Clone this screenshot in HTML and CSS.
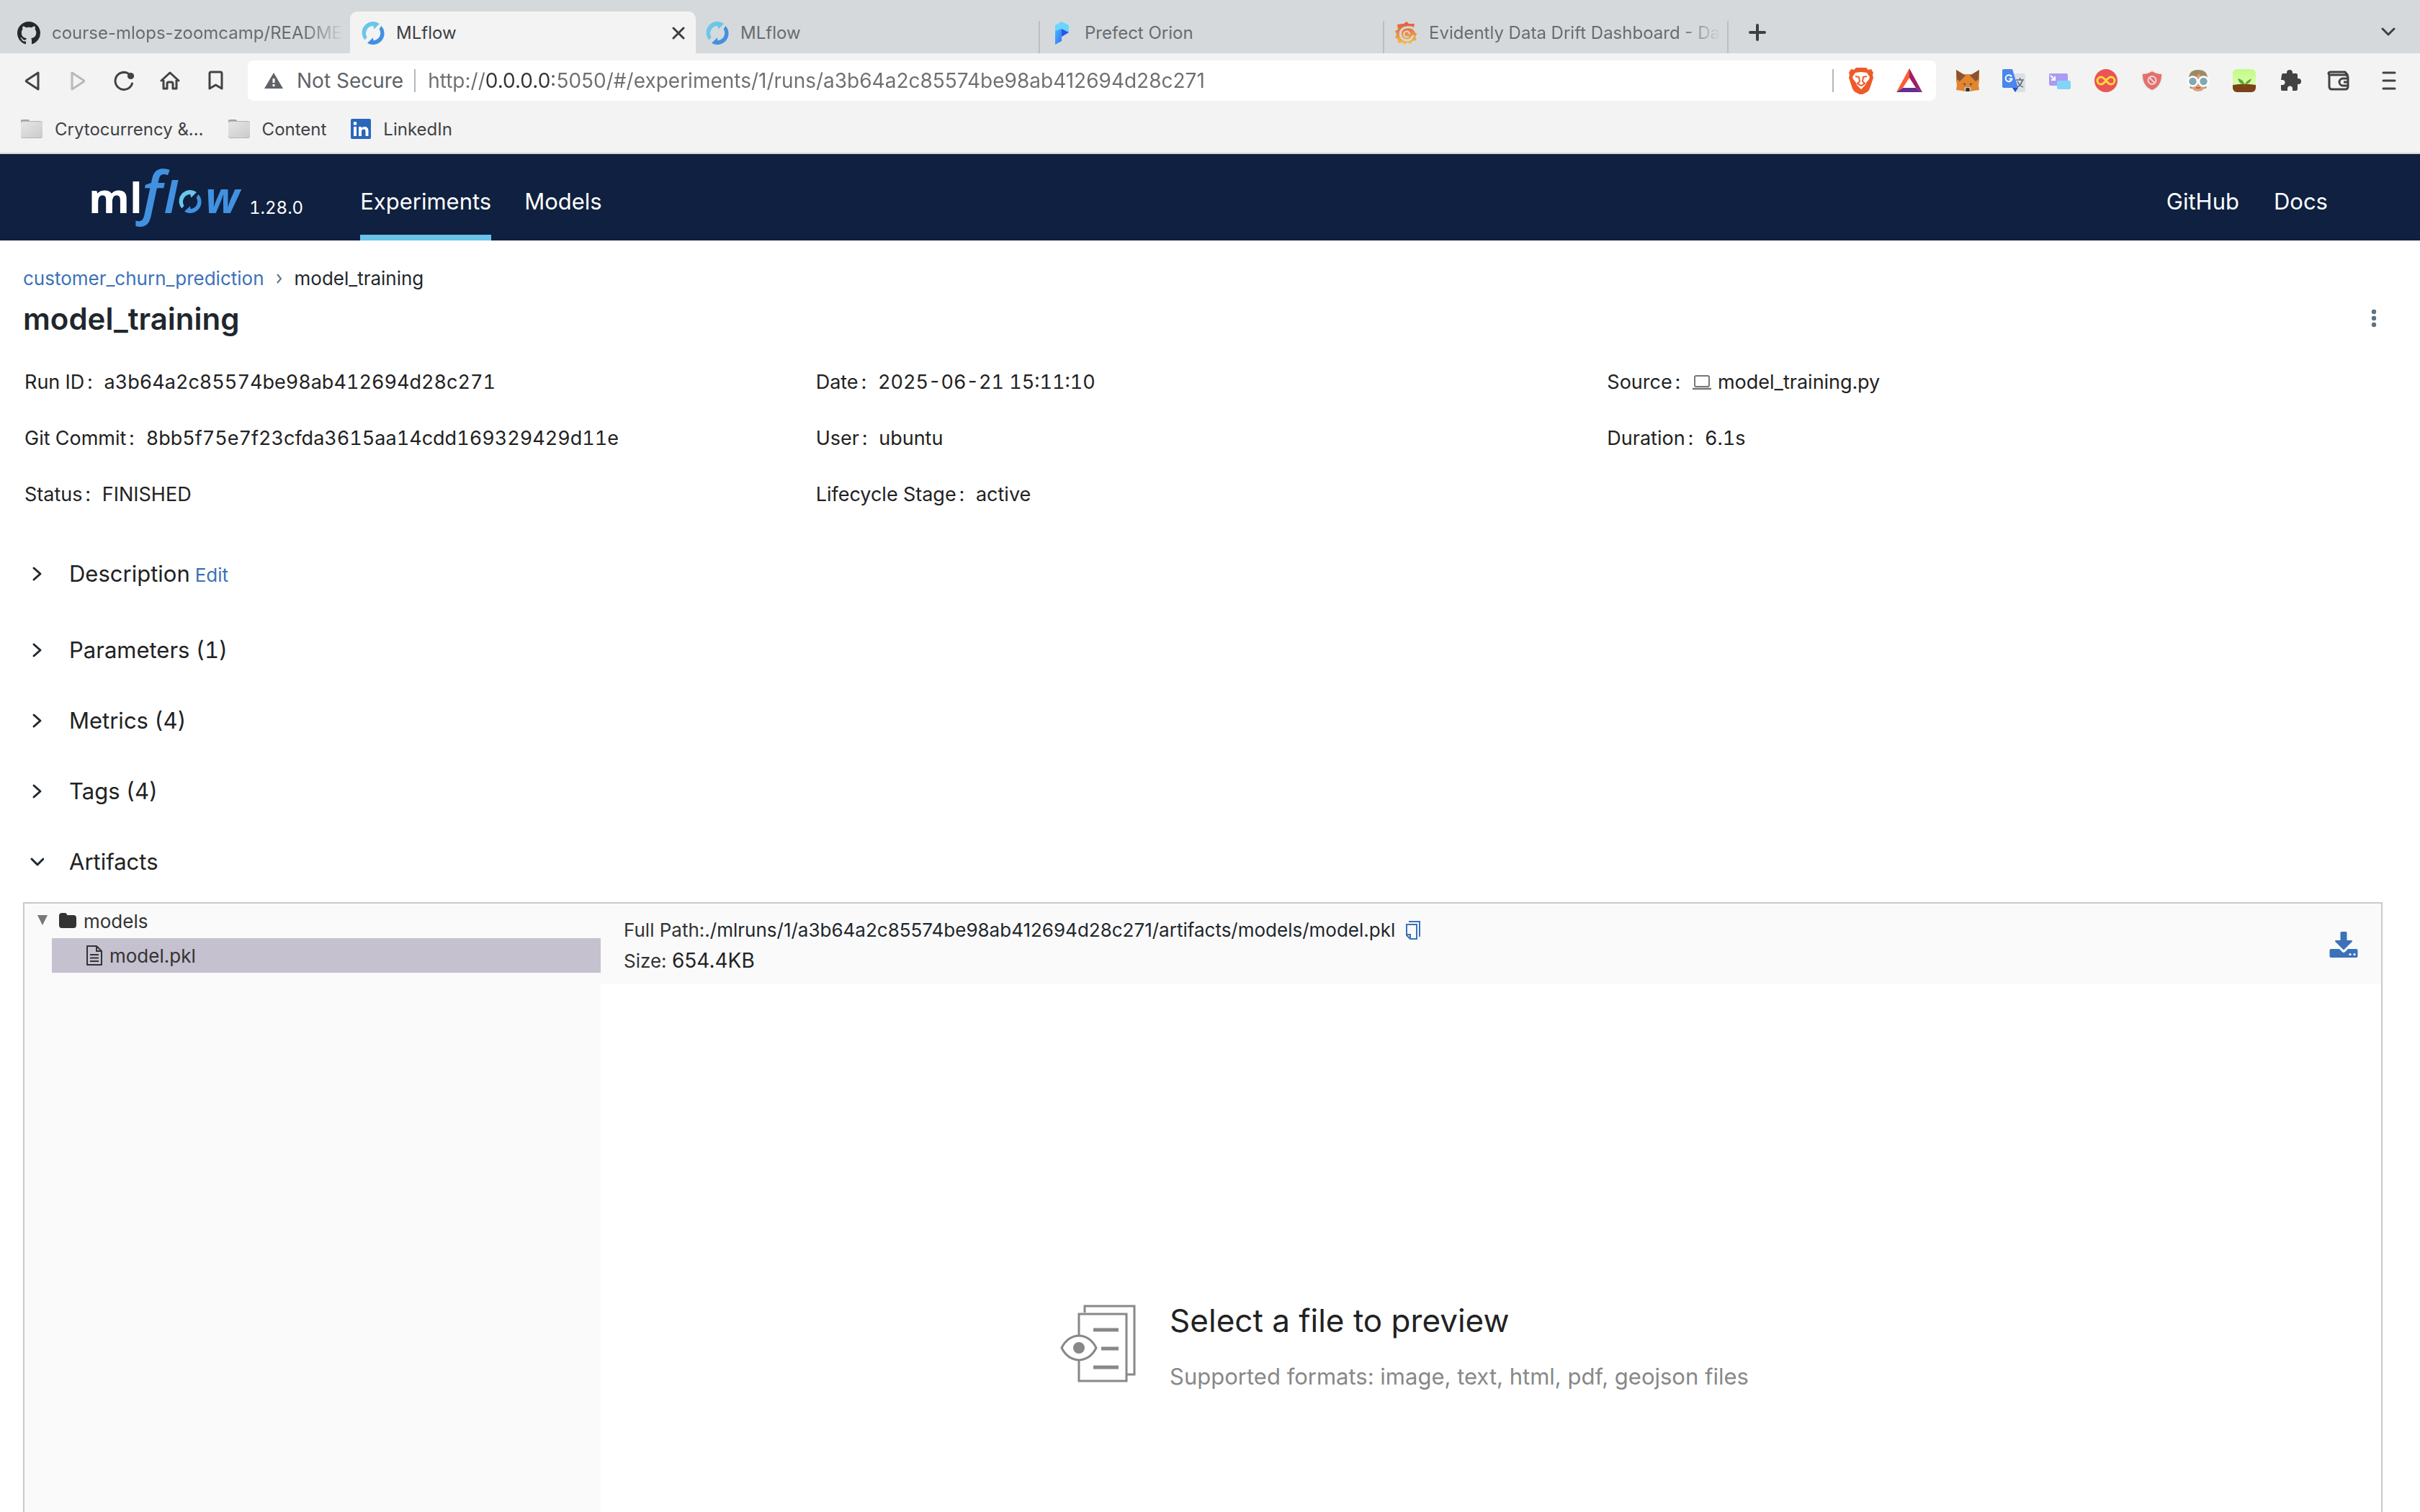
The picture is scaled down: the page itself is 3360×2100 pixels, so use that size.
FILE: index.html
```html
<!DOCTYPE html>
<html lang="en">
<head>
<meta charset="utf-8">
<meta name="viewport" content="width=device-width, initial-scale=1">
<title>MLflow</title>
<link rel="stylesheet" href="styles.css">
</head>
<body>
<svg class="defs" aria-hidden="true">
  <defs>
    <symbol id="mlflow-ring" viewBox="0 0 32 32">
      <path fill="#6ac6ea" d="M4.500 25.500A15.300 15.300 0 0 1 25 3L17.400 10.400 16.200 6A10.300 10.300 0 0 0 7.600 21.800Z"/>
      <path fill="#4291e0" d="M27.400 6A15.500 15.500 0 0 1 8 29.800L16 22.200 16.400 26.200A10.300 10.300 0 0 0 24.600 10.400Z"/>
    </symbol>
    <symbol id="folder-grey" viewBox="0 0 32 28">
      <path fill="#a3a3a3" d="M1 3a2 2 0 0 1 2-2h8a2 2 0 0 1 2 2v4H1z"/>
      <rect x="1" y="3" width="30" height="24" rx="3" fill="#b3b3b3"/>
      <rect x="1" y="4" width="30" height="22" rx="3" fill="url(#folder-fill)"/>
    </symbol>
    <linearGradient id="folder-fill" x1="0" y1="0" x2="1" y2="1"><stop offset="0" stop-color="#e6e6e6"/><stop offset="1" stop-color="#cbcbcb"/></linearGradient>
    <linearGradient id="grafana-fill" x1="0" y1="0" x2="0" y2="1"><stop offset="0" stop-color="#e0573a"/><stop offset="1" stop-color="#f3c24c"/></linearGradient>
    <linearGradient id="prefect-fill" x1="0" y1="0" x2="1" y2="1"><stop offset="0" stop-color="#4db8ff"/><stop offset="1" stop-color="#3172f5"/></linearGradient>
    <linearGradient id="plant-fill" x1="0" y1="0" x2="0" y2="1"><stop offset="0" stop-color="#c2fb86"/><stop offset="1" stop-color="#e6fcc0"/></linearGradient>
    <symbol id="chevron-right" viewBox="0 0 20 24"><path fill="none" stroke="#1f272d" stroke-width="3" stroke-linecap="round" stroke-linejoin="round" d="M6 4l9 8-9 8"/></symbol>
  </defs>
</svg>

<header class="browser">
  <nav class="tabs" aria-label="Browser tabs">
    <a class="tab first" href="#github">
      <svg width="32" height="32" viewBox="0 0 16 16"><path fill="#24292e" d="M8 0C3.58 0 0 3.58 0 8c0 3.54 2.29 6.53 5.47 7.59.4.07.55-.17.55-.38 0-.19-.01-.82-.01-1.49-2.01.37-2.53-.49-2.69-.94-.09-.23-.48-.94-.82-1.13-.28-.15-.68-.52-.01-.53.63-.01 1.08.58 1.23.82.72 1.21 1.87.87 2.33.66.07-.52.28-.87.51-1.07-1.78-.2-3.64-.89-3.64-3.95 0-.87.31-1.59.82-2.15-.08-.2-.36-1.02.08-2.12 0 0 .67-.21 2.2.82.64-.18 1.32-.27 2-.27s1.36.09 2 .27c1.53-1.04 2.2-.82 2.2-.82.44 1.1.16 1.92.08 2.12.51.56.82 1.27.82 2.15 0 3.07-1.87 3.75-3.65 3.95.29.25.54.73.54 1.48 0 1.07-.01 1.93-.01 2.2 0 .21.15.46.55.38A8.01 8.01 0 0 0 16 8c0-4.42-3.58-8-8-8z"/></svg>
      <span class="tab-title">course-mlops-zoomcamp/README.md</span>
    </a>
    <div class="tab active">
      <svg width="32" height="32"><use href="#mlflow-ring"/></svg>
      <span class="tab-title">MLflow</span>
      <button class="tab-close" aria-label="Close tab"><svg width="18" height="18" viewBox="0 0 18 18"><path stroke="#3c4043" stroke-width="3" stroke-linecap="round" d="M2 2l14 14M16 2L2 16"/></svg></button>
    </div>
    <a class="tab" href="#mlflow">
      <svg width="32" height="32"><use href="#mlflow-ring"/></svg>
      <span class="tab-title">MLflow</span>
    </a>
    <a class="tab" href="#prefect">
      <svg width="32" height="32" viewBox="0 0 32 32"><path fill="url(#prefect-fill)" d="M7 32V13l9-4v18z"/><path fill="#6ad5ff" d="M7 5l9-5 10 5v10l-10-5-9 3z"/><path fill="#2155ee" d="M16 10l10 5-10 6z"/></svg>
      <span class="tab-title">Prefect Orion</span>
    </a>
    <a class="tab last" href="#evidently">
      <svg width="32" height="32" viewBox="0 0 32 32"><path fill="url(#grafana-fill)" d="M13 3l4-3 3 3 8 0-1 5 4 5v4l-2 4 2 5-6 1-2 4-5-2-4 3-3-3-6 1 0-5-4-3 2-4-2-5 4-2-1-7z"/><path fill="none" stroke="#d5d9dc" stroke-width="3" d="M31 16C28 9 23 7 18 8A9 9 0 1 0 26 19"/><path fill="none" stroke="#d5d9dc" stroke-width="2" stroke-linecap="round" d="M21 17a4 4 0 1 0-2 4"/></svg>
      <span class="tab-title">Evidently Data Drift Dashboard - Dashboards</span>
    </a>
    <button class="new-tab" aria-label="New tab"><svg width="24" height="24" viewBox="0 0 24 24"><path stroke="#3c4043" stroke-width="4" stroke-linecap="round" d="M12 2v20M2 12h20"/></svg></button>
    <button class="tab-search" aria-label="Search tabs"><svg width="20" height="14" viewBox="0 0 20 14"><path fill="none" stroke="#3c4043" stroke-width="3" stroke-linecap="round" stroke-linejoin="round" d="M2 2l8 8 8-8"/></svg></button>
  </nav>

  <div class="toolbar">
    <button class="tool" aria-label="Back"><svg width="28" height="28" viewBox="0 0 28 28"><path fill="none" stroke="#424242" stroke-width="3" stroke-linejoin="round" d="M23 3v23L7 15.500q-1.500-1 0-2z"/></svg></button>
    <button class="tool" aria-label="Forward"><svg width="28" height="28" viewBox="0 0 28 28"><path fill="none" stroke="#b9b9b9" stroke-width="3" stroke-linejoin="round" d="M6 3v23l16-10.500q1.500-1 0-2z"/></svg></button>
    <button class="tool" aria-label="Reload"><svg width="28" height="28" viewBox="0 0 28 28"><path fill="none" stroke="#424242" stroke-width="3" stroke-linecap="round" d="M25.500 18A12 12 0 1 1 20 4"/><circle cx="23.500" cy="7.500" r="4.600" fill="#424242"/></svg></button>
    <button class="tool" aria-label="Home"><svg width="28" height="28" viewBox="0 0 28 28"><path fill="none" stroke="#424242" stroke-width="3" stroke-linecap="round" stroke-linejoin="round" d="M2 14L14 3l12 11M5 13v12h5v-7q0-2 2-2h4q2 0 2 2v7h5V13"/></svg></button>
    <button class="tool" aria-label="Bookmark"><svg width="28" height="28" viewBox="0 0 28 28"><path fill="none" stroke="#424242" stroke-width="3" stroke-linejoin="round" d="M5 25V4q0-2 2-2h13q2 0 2 2v21l-8.500-5z"/></svg></button>

    <div class="address">
      <svg class="warn" width="26" height="22" viewBox="0 0 26 22"><path fill="#5f6368" d="M13 0l13 22H0z"/><path stroke="#fff" stroke-width="3" d="M13 8v6M13 16v3"/></svg>
      <label class="secure" for="url">Not Secure</label>
      <span class="rule"></span>
      <input id="url" class="url" type="text" value="http://0.0.0.0:5050/#/experiments/1/runs/a3b64a2c85574be98ab412694d28c271">
      <span class="rule"></span>
      <button class="shield" aria-label="Brave Shields"><svg width="34" height="38" viewBox="0 0 34 38"><path fill="#ee5a29" d="M10 1h14l3 3 4-1 3 5-1 3 1 4-5 15q-1 3-4 5l-8 4-8-4q-3-2-4-5L0 15l1-4-1-3 3-5 4 1z"/><path fill="#fff" d="M9 8l8-1 8 1 4 6-1 3-4 5-1 3-6 6-6-6-1-3-4-5-1-3z"/><path fill="none" stroke="#ee5a29" stroke-width="2" d="M9 13l5 1 1 6-3 3 5 3 5-3-3-3 1-6 5-1"/></svg></button>
      <button class="rewards" aria-label="Brave Rewards"><svg width="38" height="34" viewBox="0 0 38 34"><path fill="#ff5a34" d="M19 0v13l-9 14-9 6z"/><path fill="#9e1f63" d="M19 0l18 33-9-6-9-14z"/><path fill="#662d91" d="M1 33l9-6h18l9 6z"/></svg></button>
    </div>

    <div class="extensions">
      <button class="tool" aria-label="MetaMask"><svg width="32" height="32" viewBox="0 0 32 32"><path fill="#e2852f" d="M0 1l10 6h12l10-6v15l-1 6 1 7-8 1-4 1h-8l-4-1-8-1 1-7-1-6z"/><path fill="#8b5430" d="M0 1l13 8-8 8-4-3zM32 1L19 9l8 8 4-3z"/><path fill="#c86f26" d="M8 19l5 2-1 4zM24 19l-5 2 1 4z"/><path fill="#2c343c" d="M10 20l3 2v-2zM22 20l-3 2v-2z"/><path fill="#c9c5c0" d="M12 25h8l1 4-3 2h-4l-3-2z"/><path fill="#2c343c" d="M14 26h4l1 3-1 2h-4l-1-2z"/></svg></button>
      <button class="tool" aria-label="Google Translate"><svg width="32" height="32" viewBox="0 0 32 32"><path fill="#dcdfe3" d="M14 6h16a2 2 0 0 1 2 2v22a2 2 0 0 1-2 2H18z"/><path fill="none" stroke="#5f6c78" stroke-width="1.600" d="M19 15h11M24.500 12v3M21 25q6-4 7-10M21 17q3 6 8 8"/><path fill="#2b50c4" d="M14 26h8l-4 6z"/><path fill="#4a86ec" d="M2 0h12l8 26H2a2 2 0 0 1-2-2V2a2 2 0 0 1 2-2z"/><path fill="none" stroke="#fff" stroke-width="2" d="M13 10.500a4.500 4.500 0 1 0 .500 3H9.500"/></svg></button>
      <button class="tool" aria-label="Picture window"><svg width="32" height="32" viewBox="0 0 32 32"><rect x="1" y="6" width="26" height="17" rx="2" fill="#a99cf3"/><rect x="12" y="16" width="19" height="12" rx="2" fill="#84d4f8"/><path fill="none" stroke="#fff" stroke-width="2" d="M3 9l5 5M9 10v5H4"/></svg></button>
      <button class="tool" aria-label="Infinity"><svg width="32" height="32" viewBox="0 0 32 32"><circle cx="16" cy="16" r="16" fill="#ea5455"/><path fill="none" stroke="#ffd93b" stroke-width="3" d="M16 16c-3-4-5-5-7-5a5 5 0 0 0 0 10c2 0 4-1 7-5s5-5 7-5a5 5 0 0 1 0 10c-2 0-4-1-7-5z"/></svg></button>
      <button class="tool" aria-label="Blocker"><svg width="32" height="32" viewBox="0 0 32 32"><path fill="#e2706f" stroke="#ececec" stroke-width="2" d="M16 2q6 4 14 4 1 18-14 24Q1 24 2 6q8 0 14-4z"/><circle cx="16" cy="15.500" r="5.500" fill="none" stroke="#f3d5d4" stroke-width="2"/><path stroke="#f3d5d4" stroke-width="2" d="M12 11.500l8 8"/></svg></button>
      <button class="tool" aria-label="Profile face"><svg width="32" height="32" viewBox="0 0 32 32"><path fill="#9c8a62" d="M3 16Q2 1 16 1t13 15l-2 11H5z"/><path fill="#d9a07c" d="M5 14q10-2 12-8 3 6 10 8v8q-3 9-11 9T5 22z"/><circle cx="8.500" cy="17" r="6.500" fill="#7fa9b8" stroke="#fff" stroke-width="2.500"/><circle cx="23.500" cy="17" r="6.500" fill="#7fa9b8" stroke="#fff" stroke-width="2.500"/><path stroke="#b5543c" stroke-width="1.600" d="M13 26h6"/></svg></button>
      <button class="tool" aria-label="Plant"><svg width="32" height="32" viewBox="0 0 32 32"><rect width="32" height="32" rx="6" fill="url(#plant-fill)"/><path fill="#7b4217" d="M0 22q16-3 32 0v4a6 6 0 0 1-6 6H6a6 6 0 0 1-6-6z"/><path fill="#5fa52c" d="M16 24q0-6 10-11-1 7-9 8v2zM16 21Q9 21 7 13q8 1 9 8z"/></svg></button>
      <button class="tool" aria-label="Extensions"><svg width="32" height="32" viewBox="0 0 32 32"><path fill="#424242" d="M4 8q0-2 2-2h5V5a4 4 0 0 1 8 0v1h5q2 0 2 2v5h1a4 4 0 0 1 0 8h-1v6q0 3-2 3h-5v-3a3.500 3.500 0 0 0-7 0v3H6q-3 0-3-2v-6h2a3.500 3.500 0 0 0 0-7H3z"/></svg></button>
      <button class="tool wide" aria-label="Wallet"><svg width="32" height="30" viewBox="0 0 32 30"><path fill="none" stroke="#424242" stroke-width="3" stroke-linejoin="round" d="M3 6v17q0 4 4 4h18q4 0 4-4V11q0-4-4-4H5q-3 0-3-2t3-2h20l4 5M30 12H22a5 5 0 0 0 0 10h8M30 17h-7"/></svg></button>
      <button class="tool wide" aria-label="Menu"><svg width="20" height="28" viewBox="0 0 20 28"><path stroke="#424242" stroke-width="3" stroke-linecap="round" d="M2 3h16M2 14h16M2 25h16"/></svg></button>
    </div>
  </div>

  <nav class="bookmarks" aria-label="Bookmarks">
    <a href="#crypto"><svg width="32" height="28"><use href="#folder-grey"/></svg>Crytocurrency &amp;…</a>
    <a href="#content"><svg width="32" height="28"><use href="#folder-grey"/></svg>Content</a>
    <a href="#linkedin"><svg width="30" height="28" viewBox="0 0 30 28"><rect x="1" width="28" height="28" rx="2" fill="#2a66bc"/><circle cx="7" cy="6.500" r="2.400" fill="#fff"/><path fill="#fff" d="M5 11h4v13H5zM12 11h4v2q1-2 4.500-2 5 0 5 6v7h-4v-6.500q0-3-2.500-3-3 0-3 3V24h-4z"/></svg>LinkedIn</a>
  </nav>
</header>

<header class="app-header">
  <a class="logo" href="#home" aria-label="mlflow 1.28.0">
    <svg width="220" height="100" viewBox="-8 0 220 100">
      <text class="logo-ml" x="-5" y="74">ml</text>
      <text class="logo-f" x="61" y="73">ƒ</text>
      <text class="logo-flow" x="100" y="74">l</text>
      <svg x="120" y="42" width="32" height="32"><use href="#mlflow-ring"/></svg>
      <text class="logo-flow" x="157" y="74">w</text>
    </svg>
    <span class="version">1.28.0</span>
  </a>
  <nav class="main-nav">
    <a class="current" href="#experiments">Experiments</a>
    <a href="#models">Models</a>
  </nav>
  <nav class="side-nav">
    <a href="#gh">GitHub</a>
    <a href="#docs">Docs</a>
  </nav>
</header>

<main class="page">
  <nav class="crumbs" aria-label="Breadcrumb">
    <a href="#customer_churn_prediction">customer_churn_prediction</a>
    <svg width="10" height="16" viewBox="0 0 10 16"><path fill="none" stroke="#5f7281" stroke-width="2" d="M2 2l5 6-5 6"/></svg>
    <span>model_training</span>
  </nav>
  <div class="title-row">
    <h1>model_training</h1>
    <button class="more" aria-label="More"><svg width="8" height="28" viewBox="0 0 8 28"><g fill="#5f7281"><circle cx="4" cy="4" r="3.200"/><circle cx="4" cy="13" r="3.200"/><circle cx="4" cy="22" r="3.200"/></g></svg></button>
  </div>

  <dl class="meta">
    <div><dt>Run ID<i>:</i></dt><dd>a3b64a2c85574be98ab412694d28c271</dd></div>
    <div><dt>Date<i>:</i></dt><dd>2025-06-21 15:11:10</dd></div>
    <div><dt>Source<i>:</i></dt><dd><svg width="28" height="22" viewBox="0 0 28 22"><rect x="4" y="2" width="20" height="15" rx="2" fill="none" stroke="#777" stroke-width="2"/><path stroke="#777" stroke-width="2.500" d="M1 20h26"/></svg>model_training.py</dd></div>
    <div><dt>Git Commit<i>:</i></dt><dd>8bb5f75e7f23cfda3615aa14cdd169329429d11e</dd></div>
    <div><dt>User<i>:</i></dt><dd>ubuntu</dd></div>
    <div><dt>Duration<i>:</i></dt><dd>6.1s</dd></div>
    <div><dt>Status<i>:</i></dt><dd>FINISHED</dd></div>
    <div><dt>Lifecycle Stage<i>:</i></dt><dd>active</dd></div>
  </dl>

  <div class="sections">
    <div class="section described"><button class="toggle" aria-expanded="false"><svg width="20" height="24"><use href="#chevron-right"/></svg>Description</button><a class="edit" href="#edit">Edit</a></div>
    <div class="section"><button class="toggle" aria-expanded="false"><svg width="20" height="24"><use href="#chevron-right"/></svg>Parameters (1)</button></div>
    <div class="section"><button class="toggle" aria-expanded="false"><svg width="20" height="24"><use href="#chevron-right"/></svg>Metrics (4)</button></div>
    <div class="section"><button class="toggle" aria-expanded="false"><svg width="20" height="24"><use href="#chevron-right"/></svg>Tags (4)</button></div>
    <div class="section"><button class="toggle" aria-expanded="true"><svg width="20" height="24" viewBox="0 0 20 24"><path fill="none" stroke="#1f272d" stroke-width="3" stroke-linecap="round" stroke-linejoin="round" d="M3 8l8 8 8-8"/></svg>Artifacts</button></div>
  </div>

  <section class="artifacts" aria-label="Artifacts">
    <div class="tree">
      <div class="node"><svg class="caret" width="16" height="16" viewBox="0 0 16 16"><path fill="#777" d="M0 0h14L7 14z"/></svg><svg class="dir" width="24" height="22" viewBox="0 0 24 22"><path fill="#333" d="M0 4q0-4 4-4h4q3 0 3 3h9q4 0 4 4v10q0 4-4 4H4q-4 0-4-4z"/></svg>models</div>
      <div class="node selected"><svg width="24" height="28" viewBox="0 0 24 28"><path fill="none" stroke="#333" stroke-width="2" stroke-linejoin="round" d="M2 1h13l7 7v19H2zM15 1v7h7M6 13h12M6 17.500h12M6 22h12"/></svg>model.pkl</div>
    </div>
    <div class="viewer">
      <div class="info">
        <div class="info-text">
          <div class="line path">Full Path:<span>./mlruns/1/a3b64a2c85574be98ab412694d28c271/artifacts/models/model.pkl</span><button class="copy" aria-label="Copy path"><svg width="22" height="26" viewBox="0 0 22 26"><path fill="none" stroke="#3b72b8" stroke-width="2" d="M5 1h15v21M2 5h14v20H7l-5-5zM2 19h5v6"/></svg></button></div>
          <div class="line">Size: <span class="size">654.4KB</span></div>
        </div>
        <button class="download" aria-label="Download artifact"><svg width="40" height="36" viewBox="0 0 40 36"><path fill="#3b72b8" d="M15.500 1.500Q15.500 0 17 0h6q1.500 0 1.500 1.500V12h6q2.500 0 1 2L20 25.500 8.500 14q-1.500-2 1-2h6zM2.500 24H14l4 4q2 2 4 0l4-4h11.500q2 0 2 2v8q0 2-2 2h-35q-2 0-2-2v-8q0-2 2-2z"/><circle cx="29" cy="31.500" r="1.600" fill="#fff"/><circle cx="35" cy="31.500" r="1.600" fill="#fff"/></svg></button>
      </div>
      <div class="preview">
        <svg width="106" height="110" viewBox="0 0 106 110"><g fill="none" stroke="#888" stroke-width="3"><path d="M34 12V3h69v95H92"/><path d="M26 44V14h66v93H26V78"/><path d="M2 61q8-16 24-17 16 1 24 17-8 16-24 17Q10 77 2 61z"/></g><circle cx="26" cy="61" r="8" fill="#888"/><path stroke="#888" stroke-width="5" d="M46 36h35M57 62h24M46 88h35"/></svg>
        <div class="preview-text">
          <h2>Select a file to preview</h2>
          <p>Supported formats: image, text, html, pdf, geojson files</p>
        </div>
      </div>
    </div>
  </section>
</main>
</body>
</html>
```
FILE: styles.css
```css
* { box-sizing: border-box; }

body {
  margin: 0;
  height: 100vh;
  display: flex;
  flex-direction: column;
  font-family: Inter, "Liberation Sans", sans-serif;
  font-size: 26px;
  color: #222;
  background: #fff;
  overflow: hidden;
}

svg { display: block; flex: none; }
a { color: inherit; text-decoration: none; }
button {
  padding: 0;
  border: 0;
  background: none;
  font: inherit;
  color: inherit;
  flex: none;
}
.defs { position: absolute; width: 0; height: 0; }

/* Browser chrome */
.browser { flex: none; background: #f3f3f3; border-bottom: 2px solid #d3d7da; }

.tabs {
  display: flex;
  height: 74px;
  padding: 16px 34px 0 8px;
  background: #d5d9dc;
}
.tab {
  display: flex;
  align-items: center;
  gap: 16px;
  flex: 0 1 478px;
  min-width: 0;
  padding: 2px 14px 0 14px;
  font-size: 24px;
  color: #696c6f;
  border-right: 2px solid #bcbfc1;
  border-image: linear-gradient(transparent 24%, #bcbfc1 24%) 1;
}
.tab.first { padding-left: 16px; padding-right: 8px; border: 0; }
.tab.active {
  flex-basis: 480px;
  padding: 2px 15px 0 16px;
  border: 0;
  border-radius: 10px 10px 0 0;
  background: #f3f3f3;
  color: #3c4043;
}
.tab.last .tab-title, .tab.first .tab-title {
  mask-image: linear-gradient(to left, transparent, #000 56px);
}
.tab.last { padding-right: 8px; }
.tab-title { flex: 1; min-width: 0; overflow: hidden; white-space: nowrap; line-height: 32px; }
.new-tab { margin-left: 28px; }
.tab-search { margin-left: auto; }

.toolbar { display: flex; align-items: center; height: 76px; padding: 0 8px 0 12px; }
.tool { width: 64px; height: 56px; display: flex; align-items: center; justify-content: center; }
.tool.wide { width: 70px; }
.address {
  flex: 1;
  min-width: 0;
  display: flex;
  align-items: center;
  height: 56px;
  margin: 0 12px;
  padding: 0 18px 0 23px;
  border-radius: 8px;
  background: #fff;
  font-size: 28px;
}
.secure { margin: 0 15px 0 19px; color: #5f6368; }
.rule { width: 2px; height: 32px; background: #b5b7b9; }
.url {
  flex: 1;
  min-width: 0;
  height: 40px;
  margin-left: 17px;
  padding: 0;
  border: 0;
  outline: 0;
  font: inherit;
  color: #6f6f6f;
  -webkit-text-fill-color: transparent;
  background: linear-gradient(90deg, #6f6f6f 79px, #333 79px, #333 174px, #6f6f6f 174px);
  -webkit-background-clip: text;
  background-clip: text;
}
.shield { margin: 0 31px 0 21px; }
.extensions { display: flex; }

.bookmarks {
  display: flex;
  align-items: center;
  gap: 33px;
  height: 62px;
  padding: 0 28px 4px;
  font-size: 24px;
  color: #3f4245;
}
.bookmarks a { display: flex; align-items: center; gap: 16px; }

/* Application header */
.app-header {
  flex: none;
  display: flex;
  height: 120px;
  padding: 0 128px 0 120px;
  background: #0f2040;
  color: #fff;
}
.logo { display: flex; padding-top: 8px; }
.logo-ml { font: 700 58px "Open Sans", sans-serif; fill: #fff; }
.logo-f { font: italic 600 84px "Open Sans", sans-serif; fill: #4291e0; }
.logo-flow { font: italic 700 60px "Open Sans", sans-serif; fill: #4291e0; }
.version {
  margin: 51px 0 0 6px;
  font-size: 24px;
  line-height: 32px;
  font-variant-numeric: tabular-nums;
}
.main-nav, .side-nav { display: flex; gap: 48px; font-size: 31px; line-height: 132px; }
.main-nav { gap: 46px; margin-left: 79px; }
.side-nav { margin-left: auto; }
.main-nav .current { height: 120px; box-shadow: inset 0 -8px 0 #69c3e8; }

/* Run page */
.page { flex: 1; min-height: 0; overflow: hidden; padding: 33px 52px 0 32px; }
.crumbs { display: flex; align-items: center; gap: 16px; line-height: 40px; color: #1f272d; }
.crumbs a, .edit { color: #3b72b8; }
.title-row {
  display: flex;
  align-items: center;
  justify-content: space-between;
  margin: 8px 8px 38px 0;
}
h1 { margin: 0; font-size: 42px; line-height: 56px; font-weight: 600; color: #1f272d; }

.meta {
  display: grid;
  grid-template-columns: repeat(3, 1fr);
  row-gap: 34px;
  margin: 0 -22px 64px 2px;
  line-height: 44px;
  font-size: 27px;
  font-variant-numeric: tabular-nums;
}
.meta div { display: flex; }
.meta dt i { margin: 0 16px 0 4px; font-style: normal; }
.meta dd { display: flex; align-items: center; margin: 0; }
.meta dd svg { margin-right: 8px; }

.sections {
  display: flex;
  flex-direction: column;
  gap: 50px;
  margin-bottom: 32px;
  font-size: 31px;
  line-height: 48px;
  font-variant-numeric: tabular-nums;
}
.section { display: flex; align-items: center; padding-left: 9px; }
.section.described { padding-bottom: 8px; }
.toggle { display: flex; align-items: center; gap: 35px; line-height: 48px; }
.edit { margin-left: 7px; padding-top: 4px; font-size: 26px; line-height: 44px; }

.artifacts {
  display: grid;
  grid-template-columns: 800px 1fr;
  min-height: 1114px;
  border: 2px solid #c9c9c9;
}
.tree { background: #fafafa; color: #333; }
.node { display: flex; align-items: center; height: 48px; padding-left: 18px; }
.caret { margin-right: 14px; }
.dir { margin-right: 10px; }
.node.selected { gap: 9px; margin-left: 38px; padding-left: 47px; background: #c5c1cf; }

.viewer { min-width: 0; display: flex; flex-direction: column; }
.info {
  display: flex;
  align-items: center;
  justify-content: space-between;
  height: 112px;
  padding: 2px 32px 0;
  background: #fafafa;
  color: #333;
}
.info-text { padding-top: 3px; }
.line { line-height: 42px; }
.path { display: flex; align-items: center; }
.path span { color: #1f272d; }
.copy { margin-left: 14px; }
.size { font-size: 28px; color: #222; }

.preview {
  flex: 1;
  display: flex;
  align-items: center;
  justify-content: center;
  gap: 46px;
  padding-right: 240px;
}
.preview-text { padding-top: 10px; }
h2 { margin: 0 0 26px; font-size: 44px; line-height: 56px; font-weight: 400; }
.preview p { margin: 0; font-size: 31px; line-height: 48px; color: #888; }
```
